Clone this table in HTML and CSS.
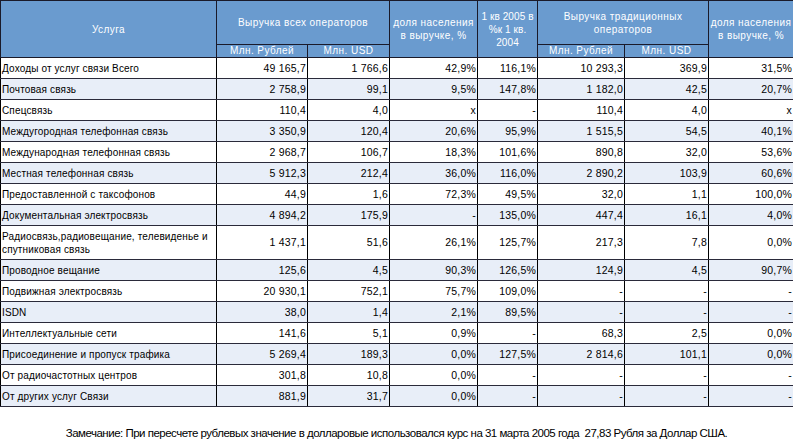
FILE: index.html
```html
<!DOCTYPE html>
<html lang="ru">
<head>
<meta charset="utf-8">
<title>Выручка операторов связи</title>
<link rel="stylesheet" href="styles.css">
</head>
<body>
<table class="grid">
  <colgroup>
    <col class="c-name"><col class="c-rub"><col class="c-usd"><col class="c-share"><col class="c-growth"><col class="c-rub2"><col class="c-usd2"><col class="c-share2">
  </colgroup>
  <thead>
    <tr class="h1">
      <th rowspan="2">Услуга</th>
      <th colspan="2">Выручка всех операторов</th>
      <th rowspan="2">доля населения в выручке, %</th>
      <th rowspan="2" class="tight">1 кв 2005 в %к 1 кв. 2004</th>
      <th colspan="2">Выручка традиционных операторов</th>
      <th rowspan="2">доля населения в выручке, %</th>
    </tr>
    <tr class="h2">
      <th>Млн. Рублей</th><th>Млн. USD</th>
      <th>Млн. Рублей</th><th>Млн. USD</th>
    </tr>
  </thead>
  <tbody>
    <tr><td>Доходы от услуг связи Всего</td><td>49 165,7</td><td>1 766,6</td><td>42,9%</td><td>116,1%</td><td>10 293,3</td><td>369,9</td><td>31,5%</td></tr>
    <tr><td>Почтовая связь</td><td>2 758,9</td><td>99,1</td><td>9,5%</td><td>147,8%</td><td>1 182,0</td><td>42,5</td><td>20,7%</td></tr>
    <tr><td>Спецсвязь</td><td>110,4</td><td>4,0</td><td>x</td><td>-</td><td>110,4</td><td>4,0</td><td>x</td></tr>
    <tr><td>Междугородная телефонная связь</td><td>3 350,9</td><td>120,4</td><td>20,6%</td><td>95,9%</td><td>1 515,5</td><td>54,5</td><td>40,1%</td></tr>
    <tr><td>Международная телефонная связь</td><td>2 968,7</td><td>106,7</td><td>18,3%</td><td>101,6%</td><td>890,8</td><td>32,0</td><td>53,6%</td></tr>
    <tr><td>Местная телефонная связь</td><td>5 912,3</td><td>212,4</td><td>36,0%</td><td>116,0%</td><td>2 890,2</td><td>103,9</td><td>60,6%</td></tr>
    <tr><td>Предоставленной с таксофонов</td><td>44,9</td><td>1,6</td><td>72,3%</td><td>49,5%</td><td>32,0</td><td>1,1</td><td>100,0%</td></tr>
    <tr><td>Документальная электросвязь</td><td>4 894,2</td><td>175,9</td><td>-</td><td>135,0%</td><td>447,4</td><td>16,1</td><td>4,0%</td></tr>
    <tr class="tall"><td>Радиосвязь,радиовещание, телевиденье и спутниковая связь</td><td>1 437,1</td><td>51,6</td><td>26,1%</td><td>125,7%</td><td>217,3</td><td>7,8</td><td>0,0%</td></tr>
    <tr><td>Проводное вещание</td><td>125,6</td><td>4,5</td><td>90,3%</td><td>126,5%</td><td>124,9</td><td>4,5</td><td>90,7%</td></tr>
    <tr><td>Подвижная электросвязь</td><td>20 930,1</td><td>752,1</td><td>75,7%</td><td>109,0%</td><td>-</td><td>-</td><td>-</td></tr>
    <tr><td>ISDN</td><td>38,0</td><td>1,4</td><td>2,1%</td><td>89,5%</td><td>-</td><td>-</td><td>-</td></tr>
    <tr><td>Интеллектуальные сети</td><td>141,6</td><td>5,1</td><td>0,9%</td><td>-</td><td>68,3</td><td>2,5</td><td>0,0%</td></tr>
    <tr><td>Присоединение и пропуск трафика</td><td>5 269,4</td><td>189,3</td><td>0,0%</td><td>127,5%</td><td>2 814,6</td><td>101,1</td><td>0,0%</td></tr>
    <tr><td>От радиочастотных центров</td><td>301,8</td><td>10,8</td><td>0,0%</td><td>-</td><td>-</td><td>-</td><td>-</td></tr>
    <tr><td>От других услуг Связи</td><td>881,9</td><td>31,7</td><td>0,0%</td><td>-</td><td>-</td><td>-</td><td>-</td></tr>
  </tbody>
</table>
<p class="note">Замечание: При пересчете рублевых значение в долларовые использовался курс на 31 марта 2005 года&nbsp; 27,83 Рубля за Доллар США.</p>
</body>
</html>
```
FILE: styles.css
```css
html, body {
  margin: 0;
  padding: 0;
  background: #ffffff;
}
body {
  font-family: "Liberation Sans", Arial, sans-serif;
  color: #000;
}
.grid {
  border-collapse: collapse;
  table-layout: fixed;
  width: 793px;
  font-size: 10.5px;
  letter-spacing: 0.2px;
}
.c-name { width: 216px; }
.c-rub { width: 91px; }
.c-usd { width: 82px; }
.c-share { width: 88px; }
.c-growth { width: 60px; }
.c-rub2 { width: 87px; }
.c-usd2 { width: 84px; }
.c-share2 { width: 85px; }

.grid th {
  background: #6a9bcf;
  color: #ffffff;
  font-weight: normal;
  border: 1px solid #1a1a2a;
  padding: 0;
  line-height: 13px;
  text-align: center;
  vertical-align: middle;
  font-size: 10px;
  letter-spacing: 0.45px;
}
.grid tr.h1 { height: 44px; }
.grid tr.h2 { height: 13px; }
.grid tr.h2 th { line-height: 12px; }
.grid th.tight { letter-spacing: 0.1px; }

.grid td {
  border-left: 1px solid #000;
  border-right: 1px solid #000;
  border-top: 1px solid #2a2a3a;
  border-bottom: 1px solid #2a2a3a;
  padding: 0 1px 0 1px;
  height: 20px;
  line-height: 13px;
  text-align: right;
  vertical-align: middle;
  white-space: nowrap;
}
.grid td:first-child {
  text-align: left;
  white-space: normal;
  font-size: 10px;
  letter-spacing: 0.15px;
}
.grid tbody tr:nth-child(even) td { background: #e8eef8; }
.grid tr.tall td { height: 33px; }

.note {
  margin: 19px 0 0 0;
  text-align: center;
  font-family: "Liberation Sans", Arial, sans-serif;
  font-size: 11.5px;
  letter-spacing: -0.5px;
  line-height: 14px;
}
```
